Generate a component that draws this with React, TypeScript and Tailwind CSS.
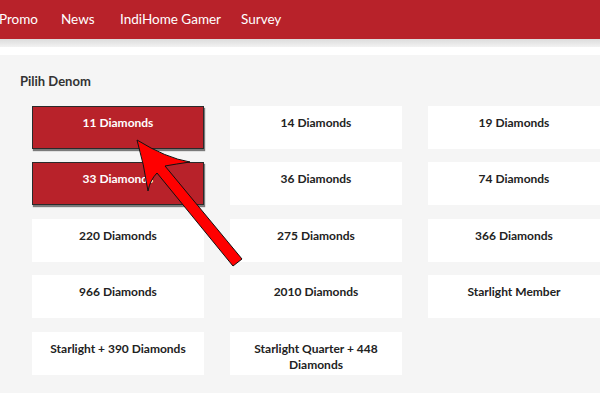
const nav = [
  { label: "Promo", w: "w-[62px]" },
  { label: "News", w: "w-[59px]" },
  { label: "IndiHome Gamer", w: "w-[121px]" },
  { label: "Survey", w: "w-[60px]" },
];

const denoms = [
  { label: "11 Diamonds", active: true },
  { label: "14 Diamonds" },
  { label: "19 Diamonds" },
  { label: "33 Diamonds", active: true },
  { label: "36 Diamonds" },
  { label: "74 Diamonds" },
  { label: "220 Diamonds" },
  { label: "275 Diamonds" },
  { label: "366 Diamonds" },
  { label: "966 Diamonds" },
  { label: "2010 Diamonds" },
  { label: "Starlight Member" },
  { label: "Starlight + 390 Diamonds" },
  { label: "Starlight Quarter + 448 Diamonds" },
];

function Arrow() {
  return (
    <svg
      className="pointer-events-none absolute left-0 top-0"
      width="600"
      height="393"
      viewBox="0 0 600 393"
    >
      <path
        d="M137 140 Q166 158 190 162 Q176 164 165 166 L242 259 L233 266 L157 173 Q150 180 148 191 Q144 164 137 140 Z"
        fill="#ff0000"
        stroke="#111"
        strokeWidth="1"
        strokeLinejoin="round"
      />
    </svg>
  );
}

export default function App() {
  return (
    <div className="relative h-[393px] w-[600px] overflow-hidden bg-[#f5f5f5] font-['Lato','Open_Sans',sans-serif]">
      <header className="h-[39px] bg-[#b8222a]">
        <nav className="-ml-[1px] flex h-full items-center text-[13.5px] text-white">
          {nav.map((n) => (
            <span key={n.label} className={n.w}>
              {n.label}
            </span>
          ))}
        </nav>
      </header>
      <div className="h-[8px] bg-gradient-to-b from-[#dcdcdc] to-[#f2f2f2]" />
      <div className="h-[8px] bg-white" />

      <section className="px-[20px] pt-[17px]">
        <h2 className="text-[13px] font-bold text-[#333]">Pilih Denom</h2>
        <div className="mt-[14px] grid grid-cols-[172px_172px_172px] gap-x-[26px] gap-y-[13.5px] pl-[12px]">
          {denoms.map((d) => (
            <div
              key={d.label}
              className={
                d.active
                  ? "h-[43px] border border-[#2a2a2a] bg-[#b8222a] px-3 pt-[8px] text-center text-[12px] font-bold leading-[16px] text-white shadow-[1px_2px_1px_rgba(0,0,0,0.5)]"
                  : "h-[43px] bg-white px-3 pt-[9px] text-center text-[12px] font-bold leading-[16px] text-[#222]"
              }
            >
              {d.label}
            </div>
          ))}
        </div>
      </section>

      <Arrow />
    </div>
  );
}
